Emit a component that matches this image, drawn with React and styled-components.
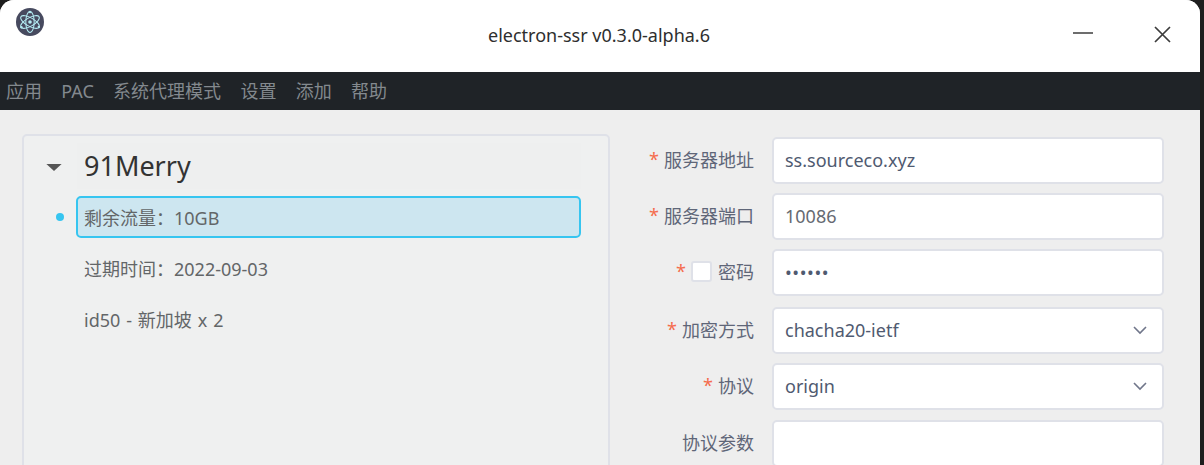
import styled, { createGlobalStyle } from 'styled-components';

const GlobalStyle = createGlobalStyle`
  html, body {
    margin: 0;
    height: 100%;
    overflow: hidden;
    background: #1e1e1e;
    font-family: "Noto Sans", "Noto Sans CJK SC", sans-serif;
  }
`;

const Screen = styled.div`
  width: 1204px;
  height: 465px;
  overflow: hidden;
  background: #1e1e1e;
`;

const Window = styled.div`
  width: 1200px;
  height: 465px;
  overflow: hidden;
  display: flex;
  flex-direction: column;
  background: #eeeeee;
  border-radius: 14px 14px 0 0;
`;

const TitleBar = styled.header`
  height: 72px;
  flex-shrink: 0;
  background: #fff;
  display: grid;
  grid-template-columns: 1fr auto 1fr;
  align-items: start;
`;

const AppIcon = styled.div`
  margin: 8px 0 0 16px;
  width: 28px;
  height: 28px;
`;

const WindowTitle = styled.div`
  padding: 23px 2px 0 0;
  font-size: 18px;
  line-height: 24px;
  color: #2e2e2e;
`;

const WindowButtons = styled.div`
  display: flex;
  justify-content: flex-end;
  gap: 59px;
  padding: 25px 28px 0 0;
`;

const WindowButton = styled.svg`
  width: 20px;
  height: 20px;
  display: block;
  stroke: #3c3c3c;
  stroke-width: 1.7;
  fill: none;
`;

const MenuBar = styled.nav`
  height: 38px;
  flex-shrink: 0;
  background: #1f2327;
  display: flex;
  align-items: center;
  gap: 19.3px;
  padding-left: 6px;
`;

const MenuItem = styled.span`
  font-size: 18px;
  color: #83898e;
  line-height: 38px;
`;

const Content = styled.main`
  flex: 1;
  display: flex;
  padding: 24px 36px 0 22px;
  gap: 28px;
  min-height: 0;
`;

const ServerPanel = styled.section`
  width: 588px;
  height: 400px;
  flex-shrink: 0;
  box-sizing: border-box;
  border: 2px solid #dfe1e8;
  border-radius: 5px;
  background: #eff0f0;
  padding: 7px 27px 0 0;
`;

const GroupRow = styled.div`
  display: flex;
  align-items: center;
  height: 46px;
`;

const Caret = styled.span`
  width: 0;
  height: 0;
  margin: 3px 15px 0 22px;
  border-left: 8px solid transparent;
  border-right: 8px solid transparent;
  border-top: 7px solid #555;
  transform: scaleX(0.95);
`;

const GroupName = styled.div`
  flex: 1;
  height: 46px;
  padding-left: 7px;
  font-size: 27px;
  line-height: 46px;
  color: #333;
  background: #eeefef;
`;

const NodeRow = styled.div`
  display: flex;
  align-items: center;
  margin-top: ${(p) => (p.$first ? '7px' : '9px')};
  height: 42px;
`;

const Dot = styled.i`
  width: 8px;
  height: 8px;
  margin: 0 12px 0 32px;
  border-radius: 50%;
  background: ${(p) => (p.$on ? '#36c5f0' : 'transparent')};
`;

const NodeLabel = styled.div`
  flex: 1;
  height: 42px;
  box-sizing: border-box;
  padding-left: 6px;
  border: 2px solid ${(p) => (p.$on ? '#36c5f0' : 'transparent')};
  border-radius: 5px;
  background: ${(p) => (p.$on ? '#cde6f0' : 'transparent')};
  font-size: 18px;
  line-height: 40px;
  word-spacing: 1.2px;
  color: #636668;
`;

const Form = styled.form`
  flex: 1;
  display: flex;
  flex-direction: column;
  padding-top: 3px;
  gap: 9px;
`;

const Field = styled.div`
  display: grid;
  grid-template-columns: 1fr 392px;
  column-gap: 18px;
  align-items: center;
  margin-top: ${(p) => p.$gap || 0}px;
`;

const Label = styled.label`
  display: flex;
  justify-content: flex-end;
  align-items: center;
  padding-bottom: 3px;
  font-size: 18px;
  color: #5f6678;
`;

const Required = styled.span`
  color: #f56c4c;
  margin-right: 5px;
  font-size: 18px;
`;

const Check = styled.span`
  width: 17px;
  height: 17px;
  margin-right: 6px;
  border: 2px solid #dfe1e8;
  border-radius: 3px;
  background: #fff;
`;

const Control = styled.div`
  height: 47px;
  box-sizing: border-box;
  border: 2px solid #dfe1e8;
  border-radius: 5px;
  background: #fff;
  display: flex;
  align-items: center;
  justify-content: space-between;
  padding: 0 14px 2px 11px;
  font-size: 18px;
  color: ${(p) => p.$color || '#4f5a70'};
`;

const Chevron = styled.svg`
  width: 16px;
  height: 16px;
  stroke: #70768a;
  stroke-width: 1.6;
  fill: none;
`;

const Secret = styled.span`
  font-size: 18px;
  letter-spacing: 0.6px;
`;

function ElectronIcon() {
  return (
    <AppIcon>
      <svg viewBox="0 0 28 28" width="28" height="28">
        <circle cx="14" cy="14" r="14" fill="#474a5f" />
        <g fill="none" stroke="#b4ecf3" strokeWidth="1.05">
          <ellipse cx="14" cy="14" rx="10.5" ry="4.2" transform="rotate(30 14 14)" />
          <ellipse cx="14" cy="14" rx="10.5" ry="4.2" transform="rotate(-30 14 14)" />
          <ellipse cx="14" cy="14" rx="10.5" ry="4.2" transform="rotate(90 14 14)" />
        </g>
        <g fill="#b4ecf3">
          <circle cx="14" cy="14" r="1.8" />
          <circle cx="14" cy="4" r="1.2" />
          <circle cx="5.5" cy="19.2" r="1.2" />
          <circle cx="22.8" cy="19" r="1.2" />
        </g>
      </svg>
    </AppIcon>
  );
}

function Select({ value }) {
  return (
    <Control>
      {value}
      <Chevron viewBox="0 0 16 16">
        <path d="M2 5l6 6 6-6" />
      </Chevron>
    </Control>
  );
}

const menus = ['应用', 'PAC', '系统代理模式', '设置', '添加', '帮助'];

export default function App() {
  return (
    <Screen>
      <GlobalStyle />
      <Window>
        <TitleBar>
          <ElectronIcon />
          <WindowTitle>electron-ssr v0.3.0-alpha.6</WindowTitle>
          <WindowButtons>
            <WindowButton viewBox="0 0 20 20">
              <path d="M0 8h20" />
            </WindowButton>
            <WindowButton viewBox="0 0 20 20">
              <path d="M3 2l15 15M18 2L3 17" />
            </WindowButton>
          </WindowButtons>
        </TitleBar>
        <MenuBar>
          {menus.map((m) => (
            <MenuItem key={m}>{m}</MenuItem>
          ))}
        </MenuBar>
        <Content>
          <ServerPanel>
            <GroupRow>
              <Caret />
              <GroupName>91Merry</GroupName>
            </GroupRow>
            <NodeRow $first>
              <Dot $on />
              <NodeLabel $on>剩余流量：10GB</NodeLabel>
            </NodeRow>
            <NodeRow>
              <Dot />
              <NodeLabel>过期时间：2022-09-03</NodeLabel>
            </NodeRow>
            <NodeRow>
              <Dot />
              <NodeLabel>id50 - 新加坡 x 2</NodeLabel>
            </NodeRow>
          </ServerPanel>
          <Form>
            <Field>
              <Label><Required>*</Required>服务器地址</Label>
              <Control>ss.sourceco.xyz</Control>
            </Field>
            <Field>
              <Label><Required>*</Required>服务器端口</Label>
              <Control $color="#666a72">10086</Control>
            </Field>
            <Field>
              <Label><Required>*</Required><Check />密码</Label>
              <Control><Secret>••••••</Secret></Control>
            </Field>
            <Field $gap={2}>
              <Label><Required>*</Required>加密方式</Label>
              <Select value="chacha20-ietf" />
            </Field>
            <Field>
              <Label><Required>*</Required>协议</Label>
              <Select value="origin" />
            </Field>
            <Field $gap={1}>
              <Label>协议参数</Label>
              <Control />
            </Field>
          </Form>
        </Content>
      </Window>
    </Screen>
  );
}
